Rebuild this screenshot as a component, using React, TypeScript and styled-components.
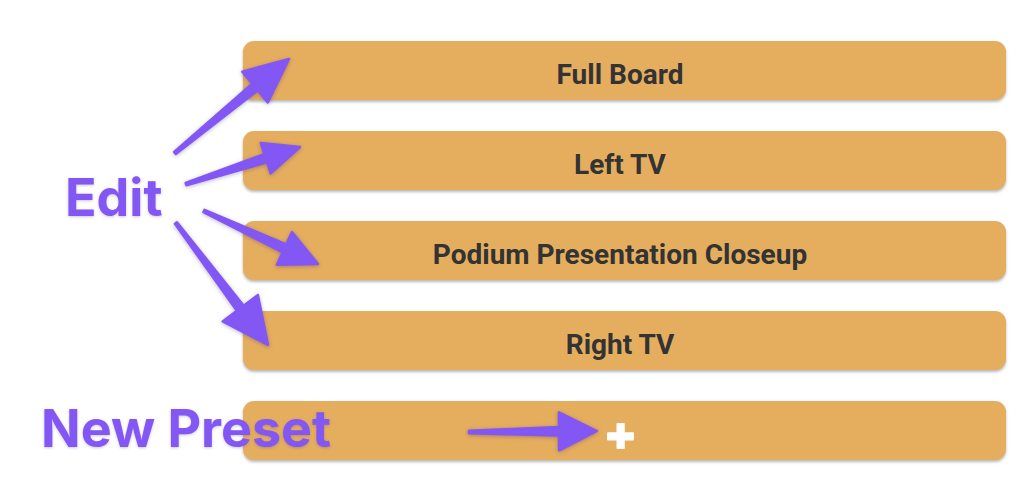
import React from "react";
import styled, { createGlobalStyle } from "styled-components";

const GlobalStyle = createGlobalStyle`
  html, body { margin: 0; padding: 0; background: #ffffff; }
  body { font-family: Roboto, "Liberation Sans", sans-serif; }
`;

const Page = styled.div`
  position: relative;
  width: 1024px;
  height: 496px;
  overflow: hidden;
  background: #ffffff;
`;

const PresetList = styled.div`
  display: flex;
  flex-direction: column;
  gap: 31px;
  padding: 41px 18px 0 243px;
`;

const PresetButton = styled.button`
  display: flex;
  align-items: center;
  justify-content: center;
  width: 763px;
  height: 59px;
  padding: 7px 9px 0 0;
  box-sizing: border-box;
  border: none;
  border-radius: 11px;
  background: #e5ae5f;
  box-shadow: 0 2px 3px rgba(0, 0, 0, 0.28);
  color: #333333;
  font-family: Roboto, "Liberation Sans", sans-serif;
  font-weight: 700;
  font-size: 28px;
  cursor: pointer;
`;

const PlusIcon = styled.svg`
  display: block;
  margin-top: 4px;
`;

const Annotation = styled.div<{ $left: number; $top: number }>`
  position: absolute;
  left: ${(p) => p.$left}px;
  top: ${(p) => p.$top}px;
  font-family: Inter, "Noto Sans", sans-serif;
  font-weight: 700;
  font-size: 52px;
  line-height: 1;
  color: #8257f4;
  white-space: nowrap;
  text-shadow: 0 1px 3px rgba(60, 30, 140, 0.25);
  pointer-events: none;
`;

const ArrowLayer = styled.svg`
  position: absolute;
  left: 0;
  top: 0;
  pointer-events: none;
  filter: drop-shadow(0 1px 2px rgba(40, 20, 100, 0.3));
`;

type ArrowSpec = {
  t: [number, number];
  p: [number, number];
  headLen: number;
  headW: number;
};

const arrows: ArrowSpec[] = [
  { t: [175, 153], p: [289, 59], headLen: 44, headW: 20 },
  { t: [186, 184], p: [300, 147], headLen: 36, headW: 16 },
  { t: [204, 211], p: [318, 264], headLen: 37, headW: 18 },
  { t: [176, 223], p: [268, 345], headLen: 46, headW: 22 },
  { t: [469, 432], p: [597, 431], headLen: 38, headW: 19 },
];

function arrowPoints(a: ArrowSpec, w0 = 2.5, w1 = 8.5): string {
  const [tx, ty] = a.t;
  const [px, py] = a.p;
  const dx = px - tx;
  const dy = py - ty;
  const len = Math.hypot(dx, dy);
  const ux = dx / len;
  const uy = dy / len;
  const nx = -uy;
  const ny = ux;
  const bx = px - ux * a.headLen;
  const by = py - uy * a.headLen;
  const pts: [number, number][] = [
    [tx + (nx * w0) / 2, ty + (ny * w0) / 2],
    [bx + (nx * w1) / 2, by + (ny * w1) / 2],
    [bx + nx * a.headW, by + ny * a.headW],
    [px, py],
    [bx - nx * a.headW, by - ny * a.headW],
    [bx - (nx * w1) / 2, by - (ny * w1) / 2],
    [tx - (nx * w0) / 2, ty - (ny * w0) / 2],
  ];
  return pts.map(([x, y]) => `${x.toFixed(1)},${y.toFixed(1)}`).join(" ");
}

const presets = ["Full Board", "Left TV", "Podium Presentation Closeup", "Right TV"];

export default function App() {
  return (
    <>
      <GlobalStyle />
      <Page>
        <PresetList>
          {presets.map((name) => (
            <PresetButton key={name}>{name}</PresetButton>
          ))}
          <PresetButton aria-label="New Preset">
            <PlusIcon width="27" height="26" viewBox="0 0 27 26">
              <rect x="0" y="9.3" width="27" height="8.3" rx="1" fill="#ffffff" />
              <rect x="9.5" y="0" width="8.3" height="26" rx="1" fill="#ffffff" />
            </PlusIcon>
          </PresetButton>
        </PresetList>
        <Annotation $left={65} $top={172}>Edit</Annotation>
        <Annotation $left={41} $top={403}>New Preset</Annotation>
        <ArrowLayer width="1024" height="496" viewBox="0 0 1024 496">
          {arrows.map((a, i) => (
            <polygon
              key={i}
              points={arrowPoints(a)}
              fill="#8257f4"
              stroke="#8257f4"
              strokeWidth={2.5}
              strokeLinejoin="round"
            />
          ))}
        </ArrowLayer>
      </Page>
    </>
  );
}
